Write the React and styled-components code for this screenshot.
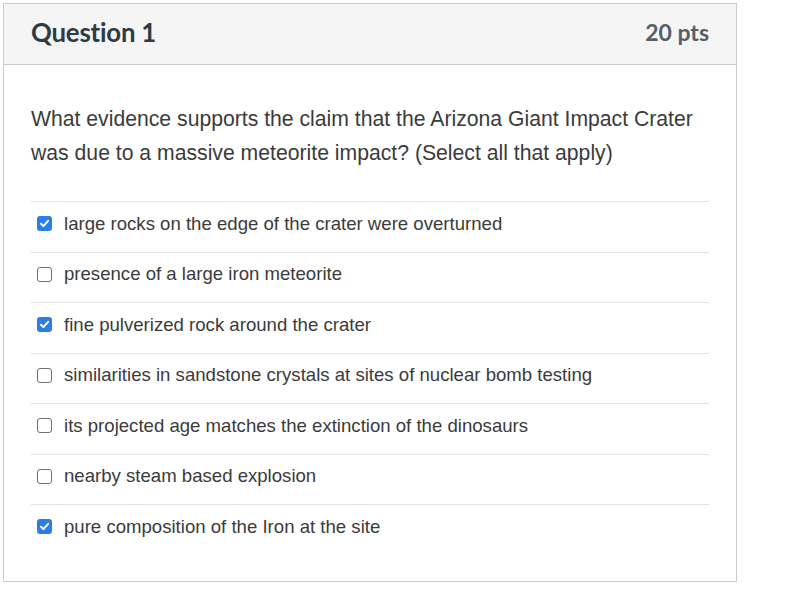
import React from "react";
import styled, { createGlobalStyle } from "styled-components";

const GlobalStyle = createGlobalStyle`
  html, body { margin: 0; padding: 0; background: #ffffff; }
  body { font-family: "Liberation Sans", Arial, sans-serif; }
`;

const options = [
  { label: "large rocks on the edge of the crater were overturned", checked: true },
  { label: "presence of a large iron meteorite", checked: false },
  { label: "fine pulverized rock around the crater", checked: true },
  { label: "similarities in sandstone crystals at sites of nuclear bomb testing", checked: false },
  { label: "its projected age matches the extinction of the dinosaurs", checked: false },
  { label: "nearby steam based explosion", checked: false },
  { label: "pure composition of the Iron at the site", checked: true },
];

// -------------------- STYLES --------------------
const Card = styled.div`
  box-sizing: border-box;
  width: 734px;
  height: 579px;
  margin: 3px 0 0 3px;
  border: 1px solid #c7cdd1;
  background: #fff;
`;

const Header = styled.div`
  box-sizing: border-box;
  height: 61px;
  padding: 0 27px 5px;
  display: flex;
  align-items: center;
  justify-content: space-between;
  background: #f5f5f5;
  border-bottom: 1px solid #c7cdd1;
  font-family: Lato, "Open Sans", sans-serif;
  font-weight: 700;
`;

const Title = styled.h2`
  margin: 0;
  font-size: 25.8px;
  font-weight: 700;
  color: #2d3b45;
  letter-spacing: -0.2px;
`;

const Points = styled.span`
  font-size: 23px;
  color: #555f66;
`;

const Body = styled.div`
  padding: 37px 27px 0;
`;

const Prompt = styled.p`
  margin: 0 0 31px;
  font-size: 21.2px;
  line-height: 34px;
  color: #3b3b3b;
`;

const List = styled.div`
  display: flex;
  flex-direction: column;
`;

const Row = styled.label`
  box-sizing: border-box;
  height: 50.5px;
  display: flex;
  align-items: center;
  gap: 12px;
  padding: 0 0 6px 6px;
  border-top: 1px solid #dfe3e5;
  font-size: 18.6px;
  color: #3b3b3b;
`;

const Box = styled.span`
  box-sizing: border-box;
  width: 15px;
  height: 15px;
  flex: none;
  border-radius: 3px;
  display: flex;
  align-items: center;
  justify-content: center;
  background: ${(p) => (p.$checked ? "#2b7de9" : "#fff")};
  border: ${(p) => (p.$checked ? "none" : "1.5px solid #6f6f6f")};
`;

function Check({ checked }) {
  return (
    <Box $checked={checked}>
      {checked && (
        <svg width="11" height="11" viewBox="0 0 10 10">
          <path d="M1.8 5.2 L4 7.4 L8.3 2.6" fill="none" stroke="#fff" strokeWidth="1.8" strokeLinecap="round" strokeLinejoin="round" />
        </svg>
      )}
    </Box>
  );
}

// -------------------- COMPONENT --------------------
export default function App() {
  return (
    <>
      <GlobalStyle />
      <Card>
        <Header>
          <Title>Question 1</Title>
          <Points>20 pts</Points>
        </Header>
        <Body>
          <Prompt>
            What evidence supports the claim that the Arizona Giant Impact Crater
            was due to a massive meteorite impact? (Select all that apply)
          </Prompt>
          <List>
            {options.map((o) => (
              <Row key={o.label}>
                <Check checked={o.checked} />
                {o.label}
              </Row>
            ))}
          </List>
        </Body>
      </Card>
    </>
  );
}
